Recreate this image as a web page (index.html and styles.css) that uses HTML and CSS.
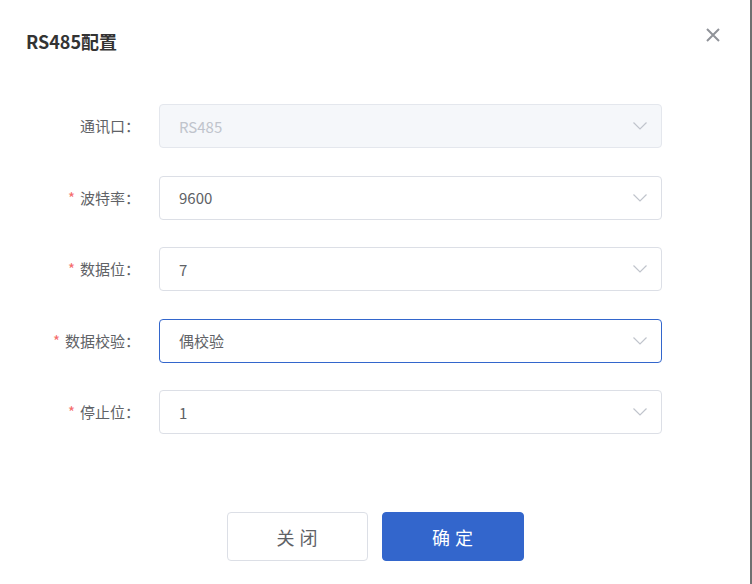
FILE: index.html
```html
<!DOCTYPE html>
<html lang="zh">
<head>
<meta charset="utf-8">
<title>RS485配置</title>
<link rel="stylesheet" href="styles.css">
</head>
<body>
<div class="page">
  <div class="dialog">
    <div class="header">
      <span class="title">RS485配置</span>
      <span class="close" aria-label="关闭">
        <svg width="14" height="14" viewBox="0 0 14 14"><path d="M1 1 L13 13 M13 1 L1 13" stroke="#909399" stroke-width="2" fill="none" stroke-linecap="butt"/></svg>
      </span>
    </div>
    <form class="form">
      <div class="row">
        <label class="label">通讯口：</label>
        <div class="select disabled"><span class="value">RS485</span><svg class="arrow" width="14" height="8" viewBox="0 0 14 8"><path d="M0.5 0.5 L7 7 L13.5 0.5" stroke="#c0c4cc" stroke-width="1.2" fill="none"/></svg></div>
      </div>
      <div class="row">
        <label class="label"><span class="req">*</span>波特率：</label>
        <div class="select"><span class="value">9600</span><svg class="arrow" width="14" height="8" viewBox="0 0 14 8"><path d="M0.5 0.5 L7 7 L13.5 0.5" stroke="#c0c4cc" stroke-width="1.2" fill="none"/></svg></div>
      </div>
      <div class="row">
        <label class="label"><span class="req">*</span>数据位：</label>
        <div class="select"><span class="value">7</span><svg class="arrow" width="14" height="8" viewBox="0 0 14 8"><path d="M0.5 0.5 L7 7 L13.5 0.5" stroke="#c0c4cc" stroke-width="1.2" fill="none"/></svg></div>
      </div>
      <div class="row">
        <label class="label"><span class="req">*</span>数据校验：</label>
        <div class="select focused"><span class="value">偶校验</span><svg class="arrow" width="14" height="8" viewBox="0 0 14 8"><path d="M0.5 0.5 L7 7 L13.5 0.5" stroke="#c0c4cc" stroke-width="1.2" fill="none"/></svg></div>
      </div>
      <div class="row">
        <label class="label"><span class="req">*</span>停止位：</label>
        <div class="select"><span class="value">1</span><svg class="arrow" width="14" height="8" viewBox="0 0 14 8"><path d="M0.5 0.5 L7 7 L13.5 0.5" stroke="#c0c4cc" stroke-width="1.2" fill="none"/></svg></div>
      </div>
    </form>
    <div class="footer">
      <button type="button" class="btn btn-default">关闭</button>
      <button type="button" class="btn btn-primary">确定</button>
    </div>
  </div>
  <div class="edge"></div>
</div>
</body>
</html>
```

FILE: styles.css
```css
html, body {
  margin: 0;
  padding: 0;
  background: #ffffff;
}
body {
  font-family: "Noto Sans CJK SC", "Noto Sans", sans-serif;
  color: #606266;
}
.page {
  display: flex;
  width: 752px;
  height: 584px;
  overflow: hidden;
}
.dialog {
  width: 750px;
  background: #ffffff;
  display: flex;
  flex-direction: column;
}
.edge {
  width: 2px;
  background: #707070;
}
.header {
  height: 79px;
  display: flex;
  align-items: center;
  justify-content: space-between;
  padding: 0 30px 0 26px;
  box-sizing: border-box;
}
.title {
  font-size: 18px;
  font-weight: 700;
  color: #333333;
  line-height: 24px;
  margin-top: 2px;
}
.close {
  display: flex;
  width: 14px;
  height: 14px;
  margin-top: -10px;
}
.form {
  padding-top: 25px;
  margin: 0;
}
.row {
  display: flex;
  align-items: center;
  margin-bottom: 27.5px;
}
.label {
  width: 159px;
  box-sizing: border-box;
  padding-right: 19px;
  text-align: right;
  font-size: 15px;
  color: #606266;
  line-height: 44px;
}
.req {
  color: #f56c6c;
  margin-right: 5px;
}
.select {
  width: 503px;
  height: 44px;
  box-sizing: border-box;
  border: 1px solid #dcdfe6;
  border-radius: 4px;
  display: flex;
  align-items: center;
  justify-content: space-between;
  padding: 0 14px 0 19px;
  background: #ffffff;
}
.value {
  font-size: 15px;
  color: #606266;
}
.select.disabled {
  background: #f5f7fa;
  border-color: #e4e7ed;
}
.select.disabled .value {
  color: #c0c4cc;
}
.select.focused {
  border-color: #3366cc;
}
.arrow {
  display: block;
}
.footer {
  margin-top: auto;
  margin-bottom: 23px;
  display: flex;
  justify-content: center;
  gap: 14px;
}
.btn {
  width: 142px;
  height: 49px;
  box-sizing: border-box;
  border-radius: 4px;
  font-family: "Noto Sans CJK SC", sans-serif;
  font-size: 18px;
  letter-spacing: 5px;
  padding: 0 0 0 5px;
  cursor: pointer;
}
.btn-default {
  width: 141px;
  background: #ffffff;
  border: 1px solid #dcdfe6;
  color: #606266;
}
.btn-primary {
  background: #3366cc;
  border: 1px solid #3366cc;
  color: #ffffff;
}
```
